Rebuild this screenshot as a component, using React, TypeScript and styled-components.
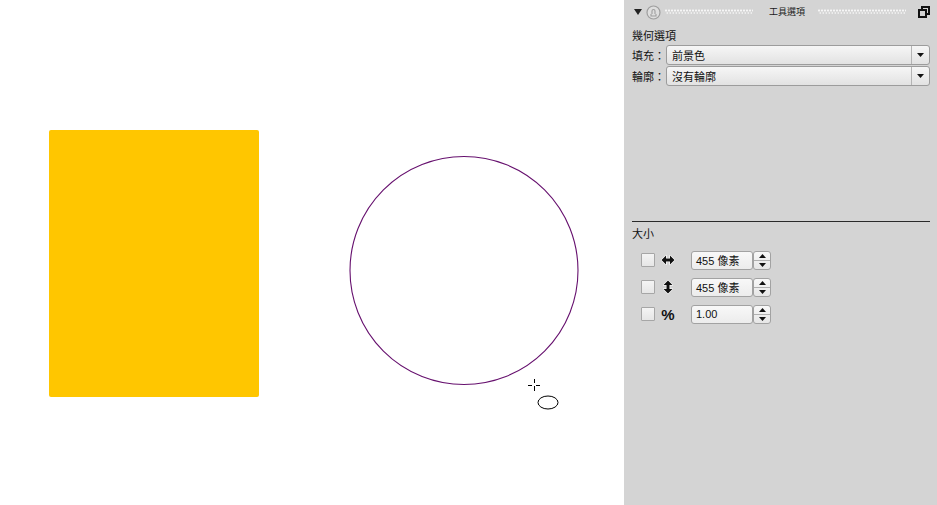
import React from "react";
import styled, { createGlobalStyle } from "styled-components";

const Global = createGlobalStyle`
  html, body { margin: 0; padding: 0; background: #fff; }
  body { font-family: "Noto Sans CJK TC", "Liberation Sans", sans-serif; }
  #root { width: 937px; height: 505px; overflow: hidden; }
`;

const Page = styled.div`
  display: flex;
  width: 937px;
  height: 505px;
`;

const Canvas = styled.div`
  width: 624px;
  height: 505px;
  background: #ffffff;
  flex: none;
`;

const Panel = styled.div`
  flex: 1;
  background: #d4d4d4;
  display: flex;
  flex-direction: column;
  padding: 0 7px 0 8px;
  color: #111;
  font-size: 11px;
`;

const Header = styled.div`
  height: 24px;
  display: flex;
  align-items: center;
  gap: 4px;
  padding-left: 2px;
`;

const Grip = styled.div`
  flex: 1;
  height: 6px;
  background-image:
    radial-gradient(circle at 1px 1.5px, #f6f6f6 1px, transparent 1.2px),
    radial-gradient(circle at 2.5px 4px, #ececec 1px, transparent 1.2px);
  background-size: 3px 6px, 3px 6px;
`;

const Title = styled.span`
  font-size: 9px;
  color: #1a1a1a;
  padding: 0 9px 0 12px;
  line-height: 10px;
`;

const SectionLabel = styled.div`
  height: 14px;
  line-height: 14px;
  margin-top: 4px;
  margin-bottom: 3px;
`;

const FieldRow = styled.div`
  display: flex;
  align-items: center;
  height: 20px;
  margin-bottom: 1px;
`;

const FieldLabel = styled.span`
  width: 34px;
  flex: none;
  white-space: nowrap;
`;

const Select = styled.div`
  flex: 1;
  height: 18px;
  border: 1px solid #9c9c9c;
  border-radius: 3px;
  background: linear-gradient(#f6f6f6, #e2e2e2);
  display: flex;
  align-items: center;
  box-sizing: content-box;
`;

const SelectText = styled.span`
  flex: 1;
  padding-left: 5px;
`;

const SelectArrow = styled.span`
  width: 17px;
  height: 18px;
  border-left: 1px solid #b4b4b4;
  display: flex;
  align-items: center;
  justify-content: center;
`;

const Spacer = styled.div<{ $h: number }>`
  height: ${(p) => p.$h}px;
  flex: none;
`;

const Divider = styled.div`
  height: 1px;
  background: #2a2a2a;
`;

const SizeRows = styled.div`
  display: flex;
  flex-direction: column;
  gap: 7px;
  padding-left: 9px;
  margin-top: 7px;
`;

const SizeRow = styled.div`
  display: flex;
  align-items: center;
  height: 20px;
`;

const Check = styled.span`
  width: 12px;
  height: 12px;
  border: 1px solid #a6a6a6;
  border-radius: 1px;
  background: linear-gradient(#f4f4f4, #e6e6e6);
  flex: none;
`;

const IconCell = styled.span`
  width: 16px;
  margin-left: 5px;
  margin-right: 15px;
  display: flex;
  align-items: center;
  justify-content: center;
`;

const Percent = styled.span`
  font-family: "Liberation Sans", Arial, sans-serif;
  font-weight: bold;
  font-size: 15px;
  line-height: 15px;
`;

const NumBox = styled.div`
  width: 62px;
  height: 19px;
  border: 1px solid #a2a2a2;
  border-radius: 3px;
  background: linear-gradient(#f8f8f8, #ececec);
  display: flex;
  align-items: center;
  padding-left: 4px;
  box-sizing: border-box;
  font-family: "Liberation Sans", "Noto Sans CJK TC", sans-serif;
  font-size: 11px;
`;

const Spinner = styled.div`
  width: 18px;
  height: 19px;
  border: 1px solid #a2a2a2;
  border-radius: 3px;
  box-sizing: border-box;
  background: linear-gradient(#f8f8f8, #e6e6e6);
  display: flex;
  flex-direction: column;
`;

const SpinHalf = styled.span<{ $top?: boolean }>`
  flex: 1;
  display: flex;
  align-items: center;
  justify-content: center;
  ${(p) => (p.$top ? "border-bottom: 1px solid #b0b0b0;" : "")}
`;

const Tri = ({ up }: { up?: boolean }) => (
  <svg width="7" height="4" viewBox="0 0 7 4">
    <polygon points={up ? "0,4 7,4 3.5,0" : "0,0 7,0 3.5,4"} fill="#111" />
  </svg>
);

const HArrow = () => (
  <svg width="16" height="14" viewBox="0 0 16 14">
    <path d="M1.5 7 L6 2.5 L6 5.5 L10 5.5 L10 2.5 L14.5 7 L10 11.5 L10 8.5 L6 8.5 L6 11.5 Z" fill="#111" stroke="#fff" strokeWidth="1.2" strokeLinejoin="round" paintOrder="stroke" />
  </svg>
);

const VArrow = () => (
  <svg width="14" height="16" viewBox="0 0 14 16">
    <path d="M7 1.5 L11.5 6 L8.5 6 L8.5 10 L11.5 10 L7 14.5 L2.5 10 L5.5 10 L5.5 6 L2.5 6 Z" fill="#111" stroke="#fff" strokeWidth="1.2" strokeLinejoin="round" paintOrder="stroke" />
  </svg>
);

const sizeData = [
  { icon: <HArrow />, value: "455 像素" },
  { icon: <VArrow />, value: "455 像素" },
  { icon: <Percent>%</Percent>, value: "1.00" },
];

export default function App() {
  return (
    <>
      <Global />
      <Page>
        <Canvas>
          <svg width="624" height="505" viewBox="0 0 624 505">
            <rect x="49" y="130" width="210" height="267" rx="2" fill="#FFC600" />
            <circle cx="464" cy="270.5" r="114" fill="none" stroke="#66106e" strokeWidth="1.1" />
            <g stroke="#000" strokeWidth="1" shapeRendering="crispEdges">
              <line x1="534" y1="379" x2="534" y2="383" />
              <line x1="534" y1="386" x2="534" y2="391" />
              <line x1="528" y1="385" x2="532" y2="385" />
              <line x1="536" y1="385" x2="540" y2="385" />
            </g>
            <ellipse cx="548" cy="402.5" rx="10" ry="6.5" fill="#fff" stroke="#000" strokeWidth="1" />
          </svg>
        </Canvas>
        <Panel>
          <Header>
            <svg width="8" height="6" viewBox="0 0 8 6">
              <polygon points="0,0 8,0 4,6" fill="#222" />
            </svg>
            <svg width="15" height="15" viewBox="0 0 15 15">
              <circle cx="7.5" cy="7.5" r="6.5" fill="#dedede" stroke="#9e9e9e" strokeWidth="1.2" />
              <path d="M5 9 L5 11 L10 11 L10 9 M6 9 L6 6 A1.5 1.5 0 0 1 9 6 L9 9" fill="none" stroke="#9e9e9e" strokeWidth="1.1" />
            </svg>
            <Grip />
            <Title>工具選項</Title>
            <Grip />
            <svg width="12" height="12" viewBox="0 0 12 12" style={{ marginLeft: 8 }}>
              <rect x="4" y="1" width="7" height="7" fill="none" stroke="#111" strokeWidth="2" />
              <rect x="1" y="4" width="7" height="7" fill="#d4d4d4" stroke="#111" strokeWidth="2" />
            </svg>
          </Header>
          <SectionLabel>幾何選項</SectionLabel>
          <FieldRow>
            <FieldLabel>填充：</FieldLabel>
            <Select>
              <SelectText>前景色</SelectText>
              <SelectArrow><Tri /></SelectArrow>
            </Select>
          </FieldRow>
          <FieldRow>
            <FieldLabel>輪廓：</FieldLabel>
            <Select>
              <SelectText>沒有輪廓</SelectText>
              <SelectArrow><Tri /></SelectArrow>
            </Select>
          </FieldRow>
          <Spacer $h={134} />
          <Divider />
          <SectionLabel>大小</SectionLabel>
          <SizeRows>
            {sizeData.map((r, i) => (
              <SizeRow key={i}>
                <Check />
                <IconCell>{r.icon}</IconCell>
                <NumBox>{r.value}</NumBox>
                <Spinner>
                  <SpinHalf $top><Tri up /></SpinHalf>
                  <SpinHalf><Tri /></SpinHalf>
                </Spinner>
              </SizeRow>
            ))}
          </SizeRows>
        </Panel>
      </Page>
    </>
  );
}
